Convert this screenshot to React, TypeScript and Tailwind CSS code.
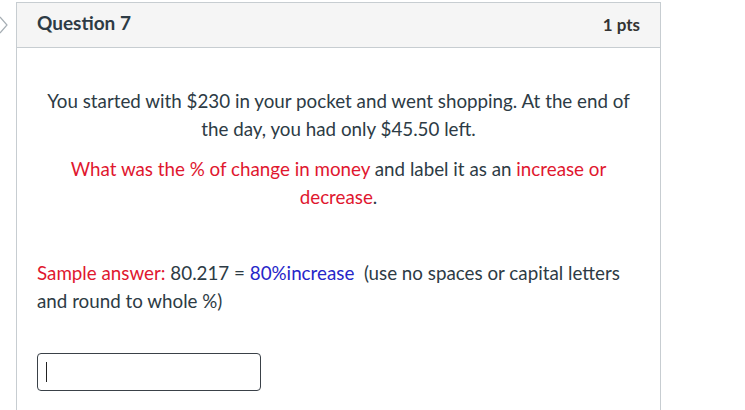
export default function App() {
  return (
    <div className="w-[745px] h-[410px] overflow-hidden bg-white font-['Lato','Noto_Sans',sans-serif] text-[#2d3b45]">
      <div className="flex pt-[2px]">
        {/* collapse arrow, cut off at the page edge */}
        <div className="w-[16px] shrink-0 pt-[14px]">
          <svg width="10" height="18" viewBox="0 0 10 18" fill="none">
            <path d="M0 1 L7 9 L0 17" stroke="#a7afb5" strokeWidth="1.2" />
          </svg>
        </div>
        <div className="w-[645px] border border-[#c7cdd1] border-b-0 h-[420px]">
          <div className="h-[45px] flex items-center justify-between px-[20px] pb-[3px] bg-[#f5f5f5] border-b border-[#c7cdd1]">
            <h2 className="text-[19px] font-bold">Question 7</h2>
            <span className="text-[17px] font-bold text-[#333] pt-[2px]">1 pts</span>
          </div>
          <div className="px-[20px] pt-[39px] text-[18.8px] leading-[28px]">
            <p className="text-center px-[8px]">
              You started with $230 in your pocket and went shopping. At the end of the day, you had only $45.50 left.
            </p>
            <p className="text-center mt-[12px] px-[8px]">
              <span className="text-[#e0172f]">What was the % of change in money</span> and label it as an{" "}
              <span className="text-[#e0172f]">increase or decrease</span>.
            </p>
            <p className="mt-[48px] pr-[20px]">
              <span className="text-[#e0172f]">Sample answer:</span> 80.217 ={" "}
              <span className="text-[#2626c9]">80%increase</span>&nbsp; (use no spaces or capital letters and round to whole %)
            </p>
            <div className="mt-[38px] w-[224px] h-[38px] border border-[#3a4148] rounded-[4px] flex items-center pl-[8px]">
              <div className="w-[1px] h-[20px] bg-[#222]" />
            </div>
          </div>
        </div>
      </div>
    </div>
  )
}
